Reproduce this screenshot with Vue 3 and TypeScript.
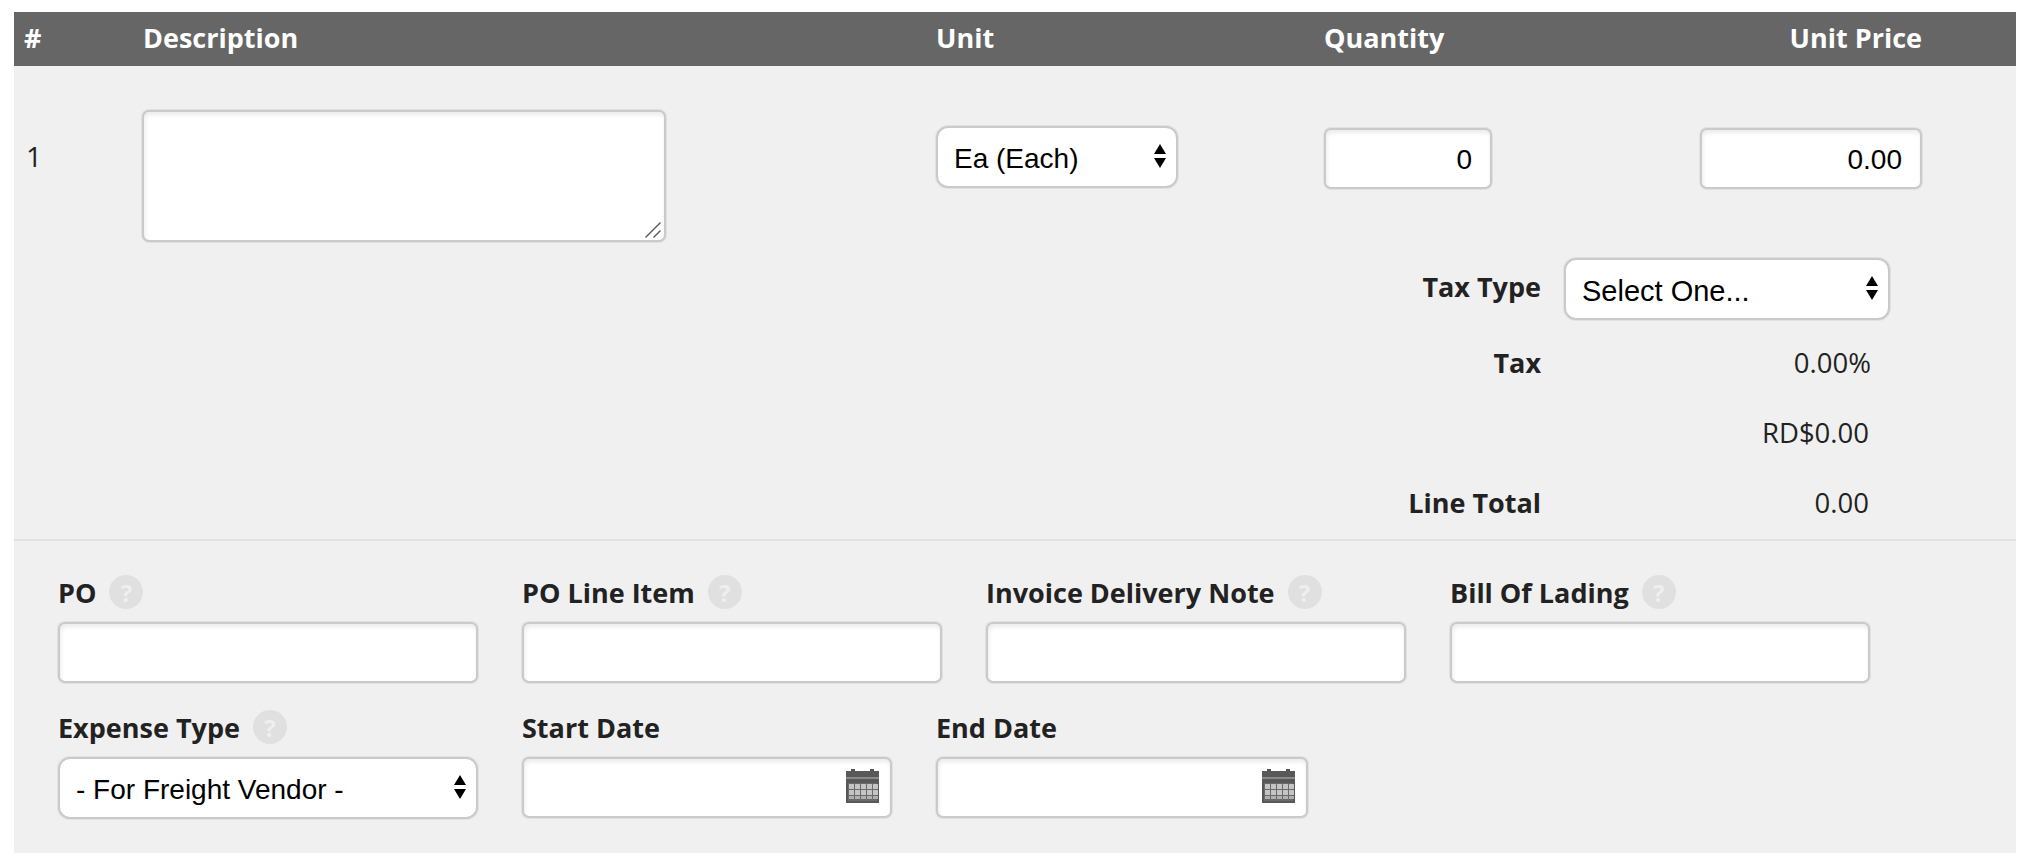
<script setup lang="ts">
interface Field { label: string; help: boolean }
const topFields: Field[] = [
  { label: 'PO', help: true },
  { label: 'PO Line Item', help: true },
  { label: 'Invoice Delivery Note', help: true },
  { label: 'Bill Of Lading', help: true },
]
const dateFields: string[] = ['Start Date', 'End Date']
const calendarCols: number[] = [4, 10, 16, 22, 28]
const calendarRows: number[] = [19, 25]
</script>

<template>
  <div class="page">
    <div class="panel">
      <div class="grid head">
        <div>#</div>
        <div>Description</div>
        <div>Unit</div>
        <div>Quantity</div>
        <div class="head-price">Unit Price</div>
      </div>

      <div class="grid line">
        <div class="num">1</div>
        <div class="area-wrap">
          <textarea class="field area"></textarea>
          <svg class="grip" viewBox="0 0 16 16"><path d="M0.5 15.5L15.5 0.5M8.5 15.5L15.5 8.5" /></svg>
        </div>
        <div>
          <div class="select-wrap unit">
            <select class="field select"><option>Ea (Each)</option></select>
            <svg class="arrows" viewBox="0 0 14 24"><path d="M7 0l6 10H1zM7 24L1 14h12z" /></svg>
          </div>
        </div>
        <div class="pad2"><input class="field input qty" value="0" /></div>
        <div class="pad2"><input class="field input price" value="0.00" /></div>
      </div>

      <div class="summary">
        <div class="s-label s-first">Tax Type</div>
        <div class="select-wrap">
          <select class="field select tax-select"><option>Select One...</option></select>
          <svg class="arrows" viewBox="0 0 14 24"><path d="M7 0l6 10H1zM7 24L1 14h12z" /></svg>
        </div>
        <div class="s-label">Tax</div>
        <div class="s-value">0.00%</div>
        <div class="s-label"></div>
        <div class="s-value v2">RD$0.00</div>
        <div class="s-label">Line Total</div>
        <div class="s-value v2">0.00</div>
      </div>

      <div class="extra">
        <div class="row">
          <div v-for="f in topFields" :key="f.label" class="col">
            <div class="lbl">{{ f.label }}<span v-if="f.help" class="help">?</span></div>
            <input class="field input" />
          </div>
        </div>
        <div class="row row2">
          <div class="col">
            <div class="lbl">Expense Type<span class="help">?</span></div>
            <div class="select-wrap">
              <select class="field select"><option>- For Freight Vendor -</option></select>
              <svg class="arrows" viewBox="0 0 14 24"><path d="M7 0l6 10H1zM7 24L1 14h12z" /></svg>
            </div>
          </div>
          <div v-for="d in dateFields" :key="d" class="col date">
            <div class="lbl">{{ d }}</div>
            <div class="date-wrap">
              <input class="field input" />
              <svg class="cal" viewBox="0 0 33 34">
                <rect x="5" y="0" width="4" height="5" fill="#555" />
                <rect x="24" y="0" width="4" height="5" fill="#555" />
                <rect x="0" y="2" width="33" height="32" fill="#585858" />
                <rect x="0" y="8" width="33" height="2" fill="#8a8a8a" />
                <rect x="2" y="14" width="29" height="18" fill="#6a6a6a" />
                <template v-for="c in calendarCols" :key="c">
                  <rect v-for="r in calendarRows" :key="r" :x="c - 1" :y="r - 4" width="5" height="5" fill="#c4c4c4" />
                  <rect :x="c - 1" y="27" width="5" height="3" fill="#b0b0b0" />
                </template>
              </svg>
            </div>
          </div>
        </div>
      </div>
    </div>
  </div>
</template>

<style>
html, body { background: #fff; }
</style>

<style scoped>
.page {
  padding: 12px 14px 10px;
  font-family: "Open Sans", "Noto Sans", sans-serif;
  color: #222;
}
.panel { background: #f0f0f0; }
.grid {
  display: grid;
  grid-template-columns: 129px 793px 388px 376px 316px;
}
.head {
  height: 54px;
  align-items: center;
  background: #666;
  color: #fff;
  font-weight: 700;
  font-size: 27px;
  line-height: 36px;
  padding-bottom: 2px;
  box-sizing: border-box;
}
.head > div:first-child { padding-left: 10px; }
.head-price { width: 222px; text-align: right; }
.line { padding-top: 44px; align-items: start; }
.num { padding: 28px 0 0 12px; font-size: 28px; line-height: 36px; }
.field {
  display: block;
  width: 100%;
  box-sizing: border-box;
  background: #fff;
  border: 2px solid #cacaca;
  border-radius: 7px;
  box-shadow: 0 0 0 1px rgba(200, 200, 200, 0.35), inset 1px 3px 4px rgba(0, 0, 0, 0.08);
  font-family: "Liberation Sans", Arial, sans-serif;
  font-size: 28px;
  color: #000;
  outline: none;
  margin: 0;
}
.area-wrap { position: relative; width: 524px; margin-left: -1px; }
.area { height: 132px; resize: none; }
.grip {
  position: absolute;
  right: 5px;
  bottom: 4px;
  width: 16px;
  height: 16px;
  fill: none;
  stroke: #555;
  stroke-width: 1.4;
  pointer-events: none;
}
.input { height: 61px; padding: 3px 18px 0; }
.qty, .price { text-align: right; }
.qty { width: 168px; }
.price { width: 222px; }
.pad2 { padding-top: 18px; }
.select-wrap { position: relative; }
.unit { width: 242px; margin-top: 16px; }
.select {
  appearance: none;
  height: 62px;
  padding: 3px 40px 0 16px;
  border-radius: 12px;
  box-shadow: 0 0 0 1px rgba(200, 200, 200, 0.35);
}
.tax-select { font-size: 29px; }
.arrows {
  position: absolute;
  right: 11px;
  top: 18px;
  width: 14px;
  height: 24px;
  fill: #000;
  pointer-events: none;
}
.summary {
  display: grid;
  grid-template-columns: 1527px 326px;
  column-gap: 23px;
  grid-auto-rows: 70px;
  grid-template-rows: 70px;
  margin-top: 16px;
  padding-bottom: 1px;
  font-size: 27.5px;
  line-height: 36px;
}
.s-label {
  display: flex;
  align-items: center;
  justify-content: flex-end;
  font-weight: 700;
  font-size: 27px;
}
.s-first { height: 58px; }
.s-value {
  display: flex;
  align-items: center;
  justify-content: flex-end;
  padding-right: 19px;
}
.v2 { padding-right: 21px; }
.extra {
  border-top: 2px solid #e2e2e2;
  padding: 34px 0 34px 44px;
}
.row { display: flex; gap: 44px; }
.row2 { margin-top: 27px; }
.col { width: 420px; }
.date { width: 370px; }
.date:last-child { width: 372px; }
.lbl {
  display: flex;
  align-items: center;
  height: 34px;
  margin-bottom: 13px;
  font-weight: 700;
  font-size: 27px;
}
.help {
  display: flex;
  align-items: center;
  justify-content: center;
  width: 34px;
  height: 34px;
  margin-left: 13px;
  border-radius: 50%;
  background: #e0e0e0;
  color: #efefef;
  font-size: 24px;
}
.date-wrap { position: relative; }
.cal {
  position: absolute;
  right: 13px;
  top: 12px;
  width: 33px;
  height: 34px;
}
</style>
